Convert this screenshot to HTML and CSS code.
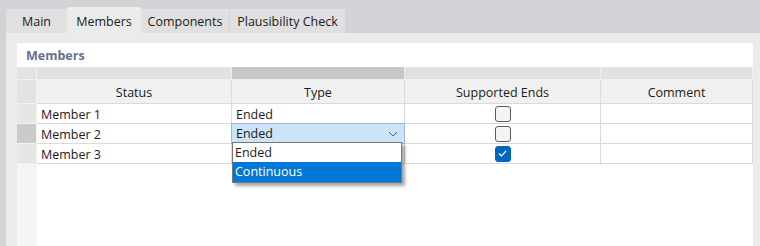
FILE: index.html
```html
<html>
<head>
    <title>Members</title>
    <link rel="stylesheet" href="styles.css">
</head>
<body>
    <div class="tabs">
        <div class="tab tab-main">Main</div>
        <div class="tab tab-members active">Members</div>
        <div class="tab tab-components">Components</div>
        <div class="tab tab-check">Plausibility Check</div>
    </div>
    <div class="panel">
        <div class="sheet">
            <div class="title">Members</div>
            <div class="grid">
                <!-- group header -->
                <div class="cell group rowhead"></div>
                <div class="cell group"></div>
                <div class="cell group dark"></div>
                <div class="cell group"></div>
                <div class="cell group"></div>
                <!-- column header -->
                <div class="cell head rowhead"></div>
                <div class="cell head">Status</div>
                <div class="cell head">Type</div>
                <div class="cell head">Supported Ends</div>
                <div class="cell head">Comment</div>
                <!-- rows -->
                <div class="cell rowhead"></div>
                <div class="cell text">Member 1</div>
                <div class="cell text">Ended</div>
                <div class="cell check"><span class="box"></span></div>
                <div class="cell"></div>

                <div class="cell rowhead current"></div>
                <div class="cell text">Member 2</div>
                <div class="cell text editor">Ended
                    <svg class="chevron" width="10" height="6" viewBox="0 0 10 6"><path d="M1 1 L5 5 L9 1" fill="none" stroke="#606060" stroke-width="1"/></svg>
                    <div class="dropdown">
                        <div class="option">Ended</div>
                        <div class="option selected">Continuous</div>
                    </div>
                </div>
                <div class="cell check"><span class="box"></span></div>
                <div class="cell"></div>

                <div class="cell rowhead"></div>
                <div class="cell text">Member 3</div>
                <div class="cell text"></div>
                <div class="cell check"><span class="box checked"><svg width="9" height="7" viewBox="0 0 9 7"><path d="M1 3.5 L3.5 6 L8 1" fill="none" stroke="#fff" stroke-width="1.2"/></svg></span></div>
                <div class="cell"></div>
            </div>
            <div class="filler"><div class="filler-head"></div></div>
        </div>
    </div>
</body>
</html>
```

FILE: styles.css
```css
body {
    margin: 0;
    background-color: #d3d2d7;
    font: 12.5px "Open Sans", "Noto Sans", sans-serif;
    color: #1b1b1b;
    height: 246px;
    overflow: hidden;
    display: flex;
    flex-direction: column;
}

.tabs {
    display: flex;
    align-items: flex-end;
    height: 33px;
    padding-left: 6px;
}

.tab {
    height: 24px;
    line-height: 25px;
    text-align: center;
    background-color: #e0e0e0;
}

.tab-main { width: 61px; }
.tab-members { width: 74px; }
.tab-components { width: 88px; border-right: 1px solid #d6d6d6; }
.tab-check { width: 115px; }

.tab.active {
    height: 26px;
    line-height: 29px;
    background-color: #ebebeb;
}

.panel {
    flex: 1;
    margin-left: 6px;
    padding: 10px 7px 0 11px;
    background-color: #ebebeb;
    display: flex;
}

.sheet {
    flex: 1;
    background-color: #fff;
    display: flex;
    flex-direction: column;
}

.title {
    height: 24px;
    line-height: 25px;
    padding-left: 9px;
    font-weight: bold;
    color: #66708f;
}

.grid {
    display: grid;
    grid-template-columns: 20px 195px 173px 196px 152px;
    grid-template-rows: 13px 24px 20px 20px 20px;
}

.cell {
    border-right: 1px solid #dadada;
    border-bottom: 1px solid #dadada;
    position: relative;
}

.group {
    background-color: #e1e1e1;
    border-right-color: #efefef;
    border-bottom-color: #f0f0f0;
}

.group.dark {
    background-color: #c6c6c6;
}

.head {
    background-color: #f0f0f0;
    text-align: center;
    line-height: 25px;
}

.rowhead {
    background-color: #e6e6e6;
    border-right-color: #f2f2f2;
    border-bottom-color: #f2f2f2;
}

.head.rowhead, .group.rowhead {
    background-color: #e3e3e3;
}

.rowhead.current {
    background-color: #cbcbcb;
}

.text {
    padding-left: 4px;
    line-height: 21px;
}

.check {
    display: flex;
    justify-content: center;
    align-items: center;
}

.box {
    width: 14px;
    height: 14px;
    border: 1px solid #5c5c5c;
    border-radius: 3px;
    background-color: #f4f4f4;
    display: flex;
    align-items: center;
    justify-content: center;
}

.box.checked {
    background-color: #0067c0;
    border-color: #0067c0;
}

.editor {
    background-color: #cce4f7;
    outline: 1px solid #a9b1e8;
    outline-offset: -1px;
    margin: -1px 0 0 -1px;
    padding-left: 5px;
    line-height: 22px;
    z-index: 1;
}

.chevron {
    position: absolute;
    right: 6px;
    top: 8px;
}

.dropdown {
    position: absolute;
    left: 1px;
    top: 19px;
    width: 168px;
    background-color: #fff;
    border: 1px solid #777;
    box-shadow: 3px 3px 3px rgba(0, 0, 0, 0.35);
    z-index: 2;
    line-height: 20px;
}

.option {
    height: 19px;
    padding-left: 2px;
}

.option.selected {
    height: 20px;
    background-color: #0078d7;
    color: #fff;
}

.filler {
    flex: 1;
    display: flex;
}

.filler-head {
    width: 20px;
    background-color: #f5f5f5;
}
```
